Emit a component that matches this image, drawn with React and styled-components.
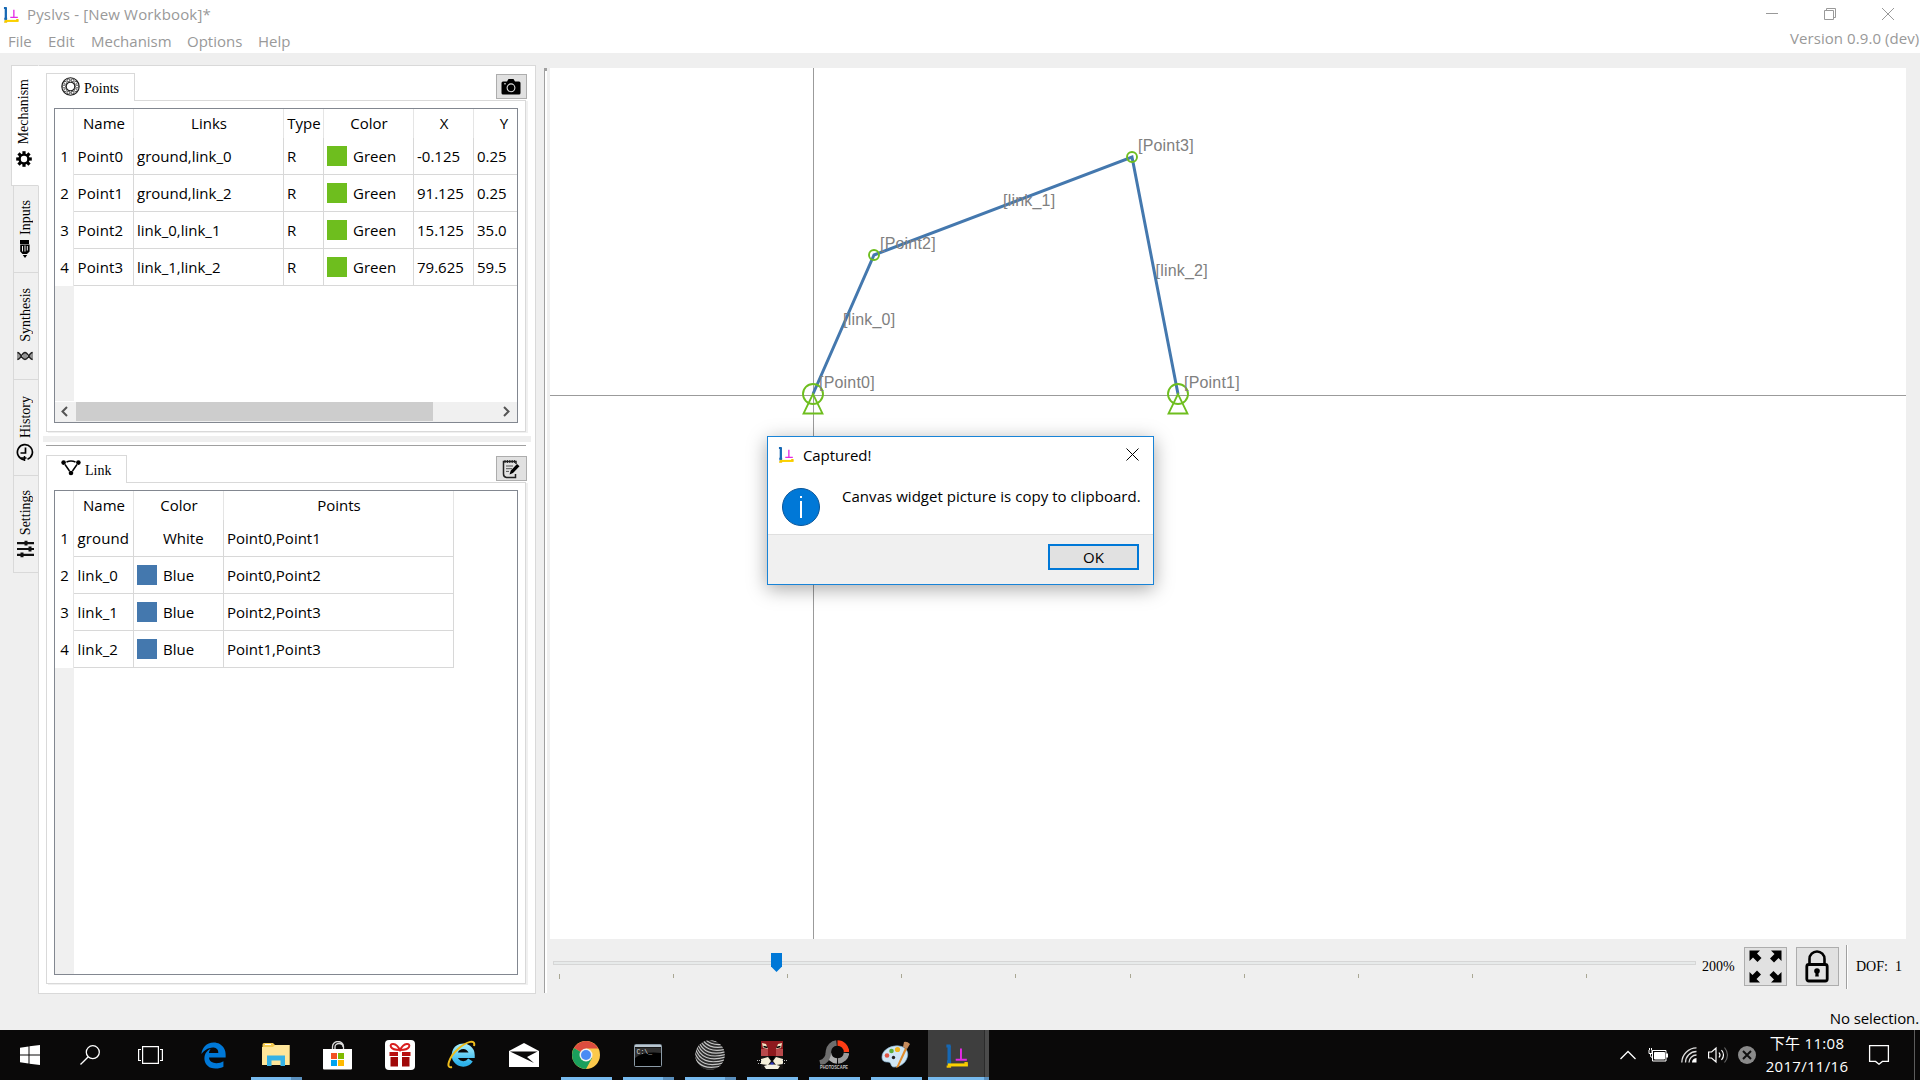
import React from "react";
import styled, { createGlobalStyle, css } from "styled-components";
import { FaEdgeLegacy } from "react-icons/fa";

const ui = `"Open Sans", "Noto Sans", "Noto Sans CJK TC", sans-serif`;
const song = `"Liberation Serif", serif`;

const GlobalStyle = createGlobalStyle`
  * { box-sizing: border-box; }
  body { margin: 0; background: #efefef; overflow: hidden; }
  svg { display: block; flex: none; }
`;

const Screen = styled.div`
  position: relative;
  width: 1920px;
  height: 1080px;
  display: flex;
  flex-direction: column;
  overflow: hidden;
  background: #efefef;
  font-family: ${ui};
  font-size: 15px;
  line-height: 20px;
  color: #000;
  white-space: nowrap;
`;

/* ---------- title and menu ---------- */
const Header = styled.header`
  height: 53px;
  flex: none;
  background: #fff;
  color: #999;
`;
const TitleBar = styled.div`
  display: flex;
  align-items: center;
  height: 28px;
  padding-left: 3px;
`;
const Title = styled.div`
  flex: 1;
  margin-left: 7px;
  letter-spacing: 0.16px;
`;
const WindowButtons = styled.div`
  display: flex;
  gap: 46px;
  padding-right: 26px;
`;
const MenuBar = styled.nav`
  display: flex;
  align-items: center;
  height: 25px;
  padding: 0 1px 0 8px;
  gap: 16px;
`;
const MenuItem = styled.span`
  width: ${(p) => p.$w}px;
  padding-bottom: ${(p) => (p.$end ? 6 : 0)}px;
  ${(p) => p.$end && css`margin-left: auto; letter-spacing: 0.07px;`}
`;

/* ---------- left dock ---------- */
const Body = styled.main`
  flex: 1;
  min-height: 0;
  display: flex;
  align-items: flex-start;
  padding-top: 12px;
`;
const SideTabs = styled.div`
  width: 39px;
  margin-right: -1px;
  flex: none;
  display: flex;
  flex-direction: column;
  align-items: flex-end;
  position: relative;
  z-index: 1;
`;
const SideTab = styled.div`
  width: ${(p) => (p.$active ? 28 : 26)}px;
  height: ${(p) => p.$h}px;
  display: flex;
  flex-direction: column;
  align-items: center;
  justify-content: flex-end;
  gap: ${(p) => (p.$active ? 5 : 4)}px;
  padding: 0 2px ${(p) => (p.$active ? 16 : 13)}px 0;
  background: ${(p) => (p.$active ? "#fff" : "#f0f0f0")};
  border: 1px solid #d9d9d9;
  border-top-width: ${(p) => (p.$active ? 1 : 0)}px;
  border-right-color: ${(p) => (p.$active ? "#fff" : "#d9d9d9")};
`;
const SideLabel = styled.span`
  writing-mode: vertical-rl;
  transform: rotate(180deg);
  font: 14px/20px ${song};
  padding-right: ${(p) => (p.$active ? 0 : 1)}px;
`;
const SideIcon = styled.div`
  height: 20px;
  display: flex;
  align-items: center;
`;
const Dock = styled.section`
  width: 498px;
  height: 929px;
  flex: none;
  display: flex;
  flex-direction: column;
  background: #fff;
  border: 1px solid #d9d9d9;
  padding: 7px 8px 9px 7px;
`;
const TabRow = styled.div`
  display: flex;
  justify-content: space-between;
  height: 28px;
  margin-bottom: -1px;
  position: relative;
  z-index: 1;
`;
const Tab = styled.div`
  width: ${(p) => p.$w}px;
  height: 28px;
  display: flex;
  align-items: flex-start;
  padding: 3px 0 0 14px;
  background: #fff;
  border: 1px solid #d9d9d9;
  border-bottom: 0;
  font: 14px/24px ${song};
  gap: 4px;
`;
const ToolButton = styled.button`
  width: ${(p) => p.$w || 31}px;
  height: ${(p) => p.$h || 25}px;
  flex: none;
  display: flex;
  align-items: center;
  justify-content: center;
  padding: 0 1px 0 0;
  margin: ${(p) => p.$m || "1px 0 0"};
  background: #e1e1e1;
  border: 1px solid #adadad;
`;
const Pane = styled.div`
  width: 480px;
  height: ${(p) => p.$h}px;
  flex: none;
  padding: 7px;
  border: 1px solid #d9d9d9;
  box-shadow: 2px 1px 0 #f0f0f0;
`;
const DockGap = styled.div`
  height: 6px;
  width: 488px;
  margin: 4px 0 3px -3px;
  flex: none;
  background: #efefef;
`;
const DockRule = styled.div`
  width: 480px;
  height: 1px;
  margin-bottom: 9px;
  flex: none;
  background: #a0a0a0;
`;

/* ---------- tables ---------- */
const Table = styled.div`
  width: 464px;
  height: ${(p) => p.$h}px;
  display: flex;
  flex-direction: column;
  border: 1px solid #828790;
  background: #fff;
  overflow: hidden;
`;
const HeadRow = styled.div`
  display: flex;
  height: 29px;
  flex: none;
`;
const Row = styled.div`
  display: flex;
  height: 37px;
  flex: none;
`;
const HeadCell = styled.div`
  width: ${(p) => p.$w}px;
  flex: none;
  padding: 4px 0 0 1px;
  text-align: center;
  border-right: 1px solid #e5e5e5;
`;
const RowNumber = styled(HeadCell)`
  padding: 8px 0 0 1px;
`;
const Cell = styled.div`
  width: ${(p) => p.$w}px;
  flex: none;
  display: flex;
  align-items: center;
  padding: 0 0 1px ${(p) => (p.$first ? 3.5 : 3)}px;
  letter-spacing: ${(p) => (p.$first ? 0.12 : 0)}px;
  border-right: 1px solid #d8d8d8;
  border-bottom: 1px solid #d8d8d8;
`;
const Swatch = styled.i`
  width: 20px;
  height: 20px;
  margin: 0 6px 0 0;
  background: ${(p) => p.$c};
`;
const EmptyRows = styled.div`
  flex: 1;
  width: 19px;
  background: #f0f0f0;
`;
const ScrollBar = styled.div`
  height: 20px;
  margin-top: 1px;
  padding-bottom: 1px;
  flex: none;
  display: flex;
  align-items: center;
  background: #f0f0f0;
`;
const ScrollThumb = styled.div`
  width: 357px;
  height: 19px;
  background: #cdcdcd;
`;
const ScrollArrow = styled.div`
  width: 21px;
  display: flex;
  justify-content: center;
  padding-right: ${(p) => (p.$end ? 0 : 3)}px;
  margin-left: ${(p) => (p.$end ? "auto" : 0)};
`;

/* ---------- canvas side ---------- */
const Splitter = styled.div`
  width: 3px;
  height: 925px;
  margin: 3px 3px 0 8px;
  flex: none;
  border-left: 1px solid #a0a0a0;
  background: linear-gradient(#a0a0a0 0 3px, #fff 3px);
`;
const Work = styled.section`
  width: 1370px;
  flex: none;
  padding-top: 3px;
`;
const Canvas = styled.div`
  width: 1356px;
  height: 871px;
  background: #fff;
`;
const Controls = styled.div`
  display: flex;
  align-items: center;
  height: 56px;
  font: 14px/20px ${song};
`;
const Slider = styled.div`
  position: relative;
  width: 1143px;
  height: 56px;
  margin-left: 3px;
  padding-top: 22px;
`;
const Groove = styled.div`
  height: 4px;
  background: #e7eaea;
  border: 1px solid #d6d6d6;
`;
const Thumb = styled.div`
  position: absolute;
  left: 218px;
  top: 14px;
`;
const Ticks = styled.div`
  display: flex;
  justify-content: space-between;
  width: 1028px;
  margin: 9px 0 0 6px;
`;
const Tick = styled.i`
  width: 1px;
  height: ${(p) => (p.$first ? 5 : 4)}px;
  background: #a9a794;
`;
const Percent = styled.span`
  width: 42px;
  margin-left: 6px;
`;
const Divider = styled.div`
  width: 2px;
  height: 44px;
  margin: 0 8px 0 7px;
  border-left: 1px solid #a0a0a0;
  background: #fff;
`;
const Dof = styled.span`
  white-space: pre;
`;
const Status = styled.div`
  margin-top: 13px;
  padding-right: 1px;
  text-align: right;
  letter-spacing: -0.1px;
`;

/* ---------- message box ---------- */
const Dialog = styled.div`
  position: absolute;
  left: 767px;
  top: 436px;
  width: 387px;
  height: 149px;
  display: flex;
  flex-direction: column;
  background: #fff;
  border: 1px solid #1883d7;
  box-shadow: 0 4px 18px rgba(0, 0, 0, 0.35);
`;
const DialogTitle = styled.div`
  display: flex;
  align-items: center;
  height: 35px;
  padding: 0 14px 0 10px;
  gap: 8px;
`;
const DialogName = styled.span`
  flex: 1;
  letter-spacing: -0.1px;
`;
const DialogBody = styled.div`
  flex: 1;
  display: flex;
  align-items: flex-start;
  gap: 22px;
  padding: 14px 0 0 14px;
`;
const InfoMark = styled.div`
  padding-top: 2px;
`;
const Message = styled.span`
  letter-spacing: 0.04px;
`;
const DialogFooter = styled.div`
  height: 50px;
  display: flex;
  justify-content: flex-end;
  padding: 9px 14px 0 0;
  background: #f0f0f0;
  border-top: 1px solid #dfdfdf;
`;
const OkButton = styled.button`
  width: 91px;
  height: 26px;
  padding: 0;
  font: 15px/20px ${ui};
  background: #e1e1e1;
  border: 2px solid #0078d7;
`;

/* ---------- taskbar ---------- */
const TaskBar = styled.footer`
  height: 50px;
  flex: none;
  display: flex;
  background: #0a0909;
  color: #fff;
`;
const StartCell = styled.div`
  width: ${(p) => p.$w}px;
  display: flex;
  align-items: center;
  justify-content: center;
  padding-right: ${(p) => p.$pr || 0}px;
`;
const AppButton = styled.div`
  width: 62px;
  display: flex;
  flex-direction: column;
  align-items: center;
`;
const AppFace = styled.div`
  width: 61px;
  height: 47px;
  display: flex;
  align-items: center;
  justify-content: center;
  padding: 3px 1px 0 0;
  background: ${(p) => (p.$active ? "linear-gradient(90deg,#3e3e3e 0 56px,#2b2b2b 56px 57px,#4b4b4b 57px)" : "none")};
`;
const RunLine = styled.div`
  width: ${(p) => (p.$active ? 61 : 51)}px;
  height: 3px;
  background: ${(p) =>
    p.$multi ? `linear-gradient(90deg,#76b9ed 0 ${p.$active ? 56 : 40}px,#5a8fbd ${p.$active ? 56 : 40}px)` : "#76b9ed"};
`;
const Tray = styled.div`
  margin-left: auto;
  display: flex;
  align-items: center;
`;
const TrayIcon = styled.div`
  width: ${(p) => p.$w}px;
`;
const Clock = styled.div`
  width: 98px;
  text-align: center;
  line-height: 23px;
  padding-bottom: 1px;
  letter-spacing: 0.3px;
`;
const ShowDesktop = styled.div`
  width: 6px;
  height: 50px;
  border-left: 1px solid #5c5c5c;
`;

/* ---------- drawings ---------- */
const Logo = ({ size = 18 }) => (
  <svg width={size} height={size} viewBox="0 0 18 18" fill="none">
    <path d="M3 2v14" stroke="#1668b4" strokeWidth="2.4" />
    <path d="M1 2.2h3M1.4 13.5h3" stroke="#1668b4" strokeWidth="2.2" />
    <path d="M2 15.8h14.5" stroke="#fbd100" strokeWidth="2.2" />
    <path d="M1.2 17h3.2M14 14.5h2.4" stroke="#f2c400" strokeWidth="1.6" />
    <path d="M11.500 4v8M7.700 12h8" stroke="#e42be4" strokeWidth="1.4" />
  </svg>
);

const Gear = () => (
  <svg width="16" height="16" viewBox="-8 -8 16 16">
    {[0, 45, 90, 135].map((a) => (
      <rect key={a} x="-1.6" y="-7.8" width="3.2" height="15.6" transform={`rotate(${a})`} />
    ))}
    <circle r="5.6" />
    <circle r="3.2" fill="#fff" />
  </svg>
);
const Brush = () => (
  <svg width="14" height="20" viewBox="0 0 14 20">
    <path d="M2 1h9v4H2z" />
    <path d="M2.2 5.5h9.4v7L9 15H4.5L2.2 12.5z" />
    <path d="M4.5 7v5.5M7 6.500v6M9.300 7v4.5" stroke="#f0f0f0" strokeWidth="1" />
    <path d="M4.800 16h4.400L7 19z" />
  </svg>
);
const Helix = () => (
  <svg width="16" height="10" viewBox="0 0 16 10" fill="none" stroke="#222" strokeWidth="1.400">
    <path d="M.5 1.500C4 1.500 4.500 8.500 8 8.500s4-7 7.500-7M.5 8.500C4 8.500 4.500 1.500 8 1.500s4 7 7.500 7" />
    <path d="M1 1v8M3 3v4M7 2v6M9 2v6M13 3v4M15 1v8" strokeWidth=".9" />
  </svg>
);
const HistoryIcon = () => (
  <svg width="18" height="19" viewBox="0 0 18 19" fill="none" stroke="#000">
    <path d="M8 16.600A7.500 7.500 0 1 1 11.500 16.200" strokeWidth="1.700" />
    <path d="M9.500 4.500v5.500H4.500" strokeWidth="1.700" />
    <path d="M5 15h5.500M8.500 13v5" strokeWidth="1.500" />
  </svg>
);
const Sliders = () => (
  <svg width="17" height="18" viewBox="0 0 17 18" stroke="#111" strokeWidth="2.200">
    <path d="M0 3.200h17M0 9h17M0 14.800h17" />
    <path d="M9 .8v4.800M13 6.600v4.800M5 12.400v4.800" strokeWidth="3" />
  </svg>
);
const Bearing = () => (
  <svg width="19" height="19" viewBox="-9.5 -9.5 19 19" fill="none" stroke="#1a1a1a">
    <circle r="8.700" strokeWidth="1.100" />
    <circle r="4.300" strokeWidth="1.100" />
    {Array.from({ length: 10 }, (_, i) => (
      <circle key={i} cx="6.500" r="1.500" strokeWidth=".7" transform={`rotate(${i * 36})`} />
    ))}
  </svg>
);
const LinkIcon = () => (
  <svg width="20" height="17" viewBox="0 0 20 17">
    <path d="M5.500 3Q10 1 14.500 3M4 5.500L8.500 12M16 5.500L11.500 12" fill="none" stroke="#000" strokeWidth="1.500" />
    <circle cx="2.600" cy="3.600" r="2.300" />
    <circle cx="17.400" cy="3.600" r="2.300" />
    <circle cx="10" cy="14" r="2.300" />
  </svg>
);
const Camera = () => (
  <svg width="20" height="16" viewBox="0 0 20 16">
    <path d="M2 2.500h4L7.500 0h5L14 2.500h4a1.500 1.500 0 0 1 1.500 1.500v10A1.500 1.500 0 0 1 18 15.500H2A1.500 1.500 0 0 1 .5 14V4A1.500 1.500 0 0 1 2 2.500z" />
    <circle cx="10" cy="8.800" r="3.900" fill="none" stroke="#ddd" strokeWidth="1.100" />
    <path d="M3 4.800h2" stroke="#ddd" />
  </svg>
);
const Notepad = () => (
  <svg width="18" height="20" viewBox="0 0 18 20" fill="none">
    <path d="M14 5V2.500H1.500V15q0 3 3 3.500H13.500V15" stroke="#222" strokeWidth="1.500" />
    <path d="M3 1v3M5.400 1v3M7.800 1v3M10.200 1v3M12.600 1v3" stroke="#222" />
    <path d="M4 7h7M4 9.700h6M4 12.400h3" stroke="#555" />
    <path d="M7.500 15.500l1.200-3.800 6.300-6.700 2.500 2.200L11 14z" fill="#000" />
  </svg>
);
const Expand = () => (
  <svg width="33" height="33" viewBox="-16.5 -16.5 33 33">
    {[0, 90, 180, 270].map((a) => (
      <path key={a} transform={`rotate(${a})`} d="M-16-16h10.500l-3 3 4.500 4.500-4 4-4.500-4.500-3.500 3.500z" />
    ))}
  </svg>
);
const Lock = () => (
  <svg width="24" height="33" viewBox="0 0 24 33">
    <path d="M4.500 14V9a7.500 7.500 0 0 1 15 0v5" fill="none" stroke="#000" strokeWidth="2.600" />
    <rect x="1.800" y="14.500" width="20.400" height="16.500" rx="2" fill="none" stroke="#000" strokeWidth="2.800" />
    <circle cx="12" cy="21" r="2.800" />
    <path d="M10.800 21h2.400l.6 5.500h-3.600z" />
  </svg>
);

const POINTS = [
  { name: "[Point0]", x: 813, y: 394, ground: true },
  { name: "[Point1]", x: 1178, y: 394, ground: true },
  { name: "[Point2]", x: 874, y: 255 },
  { name: "[Point3]", x: 1132, y: 157 },
];
const LABELS = [
  ["[link_0]", 843, 325],
  ["[link_1]", 1003, 206],
  ["[link_2]", 1155.5, 276],
];
const Mechanism = () => (
  <svg width="1356" height="871" viewBox="550 68 1356 871" fill="none">
    <path d="M550 395.500H1906M813.500 68V939" stroke="#9b9b9b" />
    <path d="M813 394L874 255L1132 157L1178 394" stroke="#4478ae" strokeWidth="3" />
    {POINTS.map((p) => (
      <g key={p.name}>
        <circle cx={p.x} cy={p.y} r={p.ground ? 10 : 5} stroke="#6ebe1e" strokeWidth="1.900" />
        {p.ground && <path d={`M${p.x} ${p.y}l-9.500 19.500h19z`} stroke="#6ebe1e" strokeWidth="1.800" />}
      </g>
    ))}
    <g fill="#808080" fontFamily='"Liberation Sans", Arial, sans-serif' fontSize="16" letterSpacing="0.2">
      {POINTS.map((p) => (
        <text key={p.name} x={p.x + 6} y={p.y - 6}>{p.name}</text>
      ))}
      {LABELS.map(([t, x, y]) => (
        <text key={t} x={x} y={y}>{t}</text>
      ))}
    </g>
  </svg>
);

const Chevron = ({ flip }) => (
  <svg width="8" height="11" viewBox="0 0 8 11" fill="none" stroke="#555" strokeWidth="2">
    <path d={flip ? "M1 1l4.500 4.500L1 10" : "M7 1L2.500 5.500 7 10"} />
  </svg>
);

const Explorer = () => (
  <svg width="28" height="24" viewBox="0 0 28 24">
    <path d="M.5 1.500Q.5 0 2 0h9l2 2h14.500v20H.5z" fill="#f4cb52" />
    <path d="M0 4h11l2-2h14.500v20H0z" fill="#ffe69a" />
    <path d="M3 1.500h6" stroke="#fff" />
    <path d="M5 23V12.500h18V23h-4.500v-5.500h-9V23z" fill="#35b2e6" />
  </svg>
);
const Store = () => (
  <svg width="29" height="29" viewBox="0 0 29 29">
    <path d="M9.500 8V5.500a5.500 5 0 0 1 11 0V8M12 8V6a4 3.500 0 0 1 8 0" fill="none" stroke="#ddd" strokeWidth="1.300" />
    <path d="M0 8h29v19.500q0 1-1 1H1q-1 0-1-1z" fill="#fff" />
    <path d="M8 12h6v6H8z" fill="#f25022" />
    <path d="M15 12h6v6h-6z" fill="#7fba00" />
    <path d="M8 19h6v6H8z" fill="#00a4ef" />
    <path d="M15 19h6v6h-6z" fill="#ffb900" />
  </svg>
);
const Gift = () => (
  <svg width="30" height="30" viewBox="0 0 30 30">
    <rect width="30" height="30" rx="4" fill="#fff" />
    <path d="M15 10C11 2 4 3 6 7c1 2 5 3 9 3 4 0 8-1 9-3 2-4-5-5-9 3z" fill="none" stroke="#d81e1e" strokeWidth="2" />
    <path d="M4.500 12H13v4H4.500zM17 12h8.500v4H17z" fill="#b80f0f" />
    <path d="M5.500 17H13v9.500H5.500zM17 17h7.500v9.500H17z" fill="#a00808" />
  </svg>
);
const Explorer11 = () => (
  <svg width="30" height="30" viewBox="0 0 30 30">
    <defs>
      <linearGradient id="ie" x1="0" y1="0" x2="0" y2="1">
        <stop offset="0" stopColor="#9be8fb" />
        <stop offset="1" stopColor="#2cb1ea" />
      </linearGradient>
    </defs>
    <path d="M23.500 20A8.800 8.800 0 1 1 25 15.200H9" fill="none" stroke="url(#ie)" strokeWidth="5.500" />
    <path d="M5 27C-2 29 2 17 11 9S29-1 27 6" fill="none" stroke="#efbd1c" strokeWidth="2" />
  </svg>
);
const Mail = () => (
  <svg width="30" height="24" viewBox="0 0 30 24">
    <path d="M0 8L15 0l15 8v16H0z" fill="#fff" />
    <path d="M1 8.500h27.500L18 14l7 6z" fill="#0a0909" />
  </svg>
);
const Chrome = () => (
  <svg width="28" height="28" viewBox="-14 -14 28 28">
    <circle r="14" fill="#fcc94b" />
    <path d="M0 0L-12.100-7A14 14 0 0 1 12.100-7L12.500-6.500H0z" fill="#dc4c3f" />
    <path d="M0 0L-12.100-7A14 14 0 0 0 0 14L6 3z" fill="#1a9f5c" />
    <circle r="6.500" fill="#f1f1f1" />
    <circle r="5" fill="#4b8bf4" />
  </svg>
);
const Terminal = () => (
  <svg width="28" height="23" viewBox="0 0 28 23">
    <rect x=".5" y=".5" width="27" height="22" rx="1" fill="#000" stroke="#8b9aa6" />
    <path d="M1 1h26v2H1z" fill="#b9c6d0" />
    <path d="M1 14Q10 7 27 9V3.500H1z" fill="#303030" />
    <text x="2.500" y="9.500" fill="#ddd" fontSize="6.500" fontFamily="Liberation Mono, monospace">C:\_</text>
  </svg>
);
const Sphere = () => (
  <svg width="30" height="30" viewBox="-15 -15 30 30">
    <defs>
      <clipPath id="ball"><circle r="14.800" /></clipPath>
    </defs>
    <g clipPath="url(#ball)">
      <circle r="15" fill="#2b2b2b" />
      <g fill="none" stroke="#c4c4c4" strokeWidth="1.200" transform="rotate(18)">
        {[-21, -18, -15, -12, -9, -6, -3, 0, 3, 6, 9, 12, 15].map((y) => (
          <path key={y} d={`M-17 ${y - 6}Q-5 ${y + 12} 17 ${y - 4}`} />
        ))}
      </g>
    </g>
  </svg>
);
const Lion = () => (
  <svg width="30" height="29" viewBox="0 0 30 29">
    <path d="M4 0h22v28H4z" fill="#8e1a1e" />
    <path d="M4 8h7v9H4zM19 8h7v9h-7z" fill="#b8494b" />
    <path d="M5 2l4 1 2 5-5-1zM25 2l-4 1-2 5 5-1z" fill="#f4e6c4" />
    <path d="M6.500 5.500l4 1M23.500 5.500l-4 1" stroke="#000" strokeWidth="1.800" />
    <path d="M4 15h22v13H4z" fill="#161312" />
    <path d="M4 18l7-2 3 4-3 4-7-1zM26 18l-7-2-3 4 3 4 7-1z" fill="#f6f0da" />
    <path d="M12 15h6l-2 4h-2z" fill="#000" />
    <path d="M7 25q8-3.500 16 0l-2 3H9z" fill="#f4f0e2" />
    <path d="M13.500 21.500h3v2h-3z" fill="#2b35c9" />
    <path d="M0 19.500h5M1 22.500h4M25 19.500h5M25 22.500h4" stroke="#bbb" strokeDasharray="1 1" />
  </svg>
);
const PhotoScape = () => (
  <svg width="30" height="31" viewBox="0 0 30 31">
    <g fill="none" strokeWidth="5.500">
      <path d="M18.500 3A9 9 0 0 1 27.500 12" stroke="#ff3c14" />
      <path d="M27.500 13A9 9 0 0 1 19 21" stroke="#9a9a9a" />
      <path d="M18 21A9 9 0 0 1 9.500 13" stroke="#b0b0b0" />
      <path d="M17.500 3A9 9 0 0 0 9.500 11Q9.500 21 1 23" stroke="#6e6e6e" />
    </g>
    <path d="M0 24.500h30v6.500H0z" fill="#0a0909" />
    <text x="1" y="29.200" textLength="28" lengthAdjust="spacingAndGlyphs" fill="#c8c8c8" fontSize="5.500" fontWeight="bold" fontFamily="Liberation Sans, sans-serif">PHOTOSCAPE</text>
  </svg>
);
const Paint = () => (
  <svg width="30" height="28" viewBox="0 0 30 28">
    <path d="M1 16C1 9 10 4 18 5c8 1 10 7 8 12-2 6-8 9-13 9-4 0-2-5-6-5S1 20 1 16z" fill="#cfe6f5" stroke="#8ab6d6" strokeWidth=".7" />
    <circle cx="6" cy="14.500" r="2.300" fill="#e05545" />
    <circle cx="10.500" cy="10" r="2.300" fill="#5cae3c" />
    <circle cx="16.500" cy="8.500" r="2.600" fill="#f2b51d" />
    <circle cx="12.500" cy="16.500" r="1.700" fill="#222" />
    <path d="M15 27L24 7l2 1-8.500 18z" fill="#e08a2a" />
    <path d="M23 1q3-1 6 2l-3 5-4-2z" fill="#c58b5c" />
  </svg>
);

/* ---------- data ---------- */
const SIDE = [
  ["Mechanism", 121, Gear],
  ["Inputs", 87, Brush],
  ["Synthesis", 107, Helix],
  ["History", 96, HistoryIcon],
  ["Settings", 97, Sliders],
];
const POINT_COLS = [["Name", 60], ["Links", 150], ["Type", 40], ["Color", 90], ["X", 60], ["Y", 60]];
const POINT_ROWS = [
  ["Point0", "ground,link_0", "R", "Green", "-0.125", "0.25"],
  ["Point1", "ground,link_2", "R", "Green", "91.125", "0.25"],
  ["Point2", "link_0,link_1", "R", "Green", "15.125", "35.0"],
  ["Point3", "link_1,link_2", "R", "Green", "79.625", "59.5"],
];
const LINK_COLS = [["Name", 60], ["Color", 90], ["Points", 230]];
const LINK_ROWS = [
  ["ground", "White", "Point0,Point1"],
  ["link_0", "Blue", "Point0,Point2"],
  ["link_1", "Blue", "Point2,Point3"],
  ["link_2", "Blue", "Point1,Point3"],
];
const COLORS = { Green: "#6ebe1e", Blue: "#4478ae", White: "#fff" };
const APPS = [
  { icon: <FaEdgeLegacy size={27} color="#0078d7" /> },
  { icon: <Explorer />, run: true, multi: true },
  { icon: <Store /> },
  { icon: <Gift /> },
  { icon: <Explorer11 /> },
  { icon: <Mail /> },
  { icon: <Chrome />, run: true },
  { icon: <Terminal />, run: true, multi: true },
  { icon: <Sphere />, run: true, multi: true },
  { icon: <Lion />, run: true },
  { icon: <PhotoScape />, run: true },
  { icon: <Paint />, run: true },
  { icon: <Logo size={25} />, run: true, multi: true, active: true },
];

const DataTable = ({ cols, rows, height, scroll }) => (
  <Table $h={height}>
    <HeadRow>
      <HeadCell $w={19} />
      {cols.map(([name, w]) => <HeadCell key={name} $w={w}>{name}</HeadCell>)}
    </HeadRow>
    {rows.map((r, i) => (
      <Row key={i}>
        <RowNumber $w={19}>{i + 1}</RowNumber>
        {r.map((v, j) => (
          <Cell key={j} $w={cols[j][1]} $first={j === 0}>
            {COLORS[v] && <Swatch $c={COLORS[v]} />}
            {v}
          </Cell>
        ))}
      </Row>
    ))}
    <EmptyRows />
    {scroll && (
      <ScrollBar>
        <ScrollArrow><Chevron /></ScrollArrow>
        <ScrollThumb />
        <ScrollArrow $end><Chevron flip /></ScrollArrow>
      </ScrollBar>
    )}
  </Table>
);

export default function App() {
  return (
    <Screen>
      <GlobalStyle />
      <Header>
        <TitleBar>
          <Logo size={17} />
          <Title>Pyslvs - [New Workbook]*</Title>
          <WindowButtons>
            <svg width="12" height="12"><path d="M0 5.500h12" stroke="#999" /></svg>
            <svg width="12" height="12" fill="none" stroke="#999"><path d="M.5 2.500h9v9h-9zM2.500 2.500v-2h9v9h-2" /></svg>
            <svg width="12" height="12" stroke="#999"><path d="M0 0l12 12M12 0L0 12" /></svg>
          </WindowButtons>
        </TitleBar>
        <MenuBar>
          <MenuItem $w={24}>File</MenuItem>
          <MenuItem $w={27}>Edit</MenuItem>
          <MenuItem $w={80}>Mechanism</MenuItem>
          <MenuItem $w={55}>Options</MenuItem>
          <MenuItem $w={32}>Help</MenuItem>
          <MenuItem $w={129} $end>Version 0.9.0 (dev)</MenuItem>
        </MenuBar>
      </Header>

      <Body>
        <SideTabs>
          {SIDE.map(([name, h, Icon], i) => (
            <SideTab key={name} $h={h} $active={i === 0}>
              <SideLabel $active={i === 0}>{name}</SideLabel>
              <SideIcon><Icon /></SideIcon>
            </SideTab>
          ))}
        </SideTabs>
        <Dock>
          <TabRow>
            <Tab $w={89}><Bearing />Points</Tab>
            <ToolButton><Camera /></ToolButton>
          </TabRow>
          <Pane $h={332}><DataTable cols={POINT_COLS} rows={POINT_ROWS} height={315} scroll /></Pane>
          <DockGap />
          <DockRule />
          <TabRow>
            <Tab $w={81}><LinkIcon />Link</Tab>
            <ToolButton><Notepad /></ToolButton>
          </TabRow>
          <Pane $h={502}><DataTable cols={LINK_COLS} rows={LINK_ROWS} height={485} /></Pane>
        </Dock>
        <Splitter />
        <Work>
          <Canvas><Mechanism /></Canvas>
          <Controls>
            <Slider>
              <Groove />
              <Ticks>{Array.from({ length: 10 }, (_, i) => <Tick key={i} $first={i === 0} />)}</Ticks>
              <Thumb>
                <svg width="11" height="19"><path d="M0 0h11v13.500L5.500 19 0 13.500z" fill="#0078d7" /></svg>
              </Thumb>
            </Slider>
            <Percent>200%</Percent>
            <ToolButton $w={43} $h={39} $m="0 9px 2px 0"><Expand /></ToolButton>
            <ToolButton $w={43} $h={39} $m="0 0 2px"><Lock /></ToolButton>
            <Divider />
            <Dof>{"DOF:  1"}</Dof>
          </Controls>
          <Status>No selection.</Status>
        </Work>
      </Body>

      <TaskBar>
        <StartCell $w={60}>
          <svg width="20" height="20" fill="#fff"><path d="M0 2.700L8.500 1.500v8H0zM9.500 1.300L20 0v9.500H9.500zM0 10.500h8.500v8L0 17.300zM9.500 10.500H20V20L9.500 18.700z" /></svg>
        </StartCell>
        <StartCell $w={60}>
          <svg width="20" height="20" fill="none" stroke="#fff" strokeWidth="1.300"><circle cx="12.800" cy="7.200" r="6.500" /><path d="M8.300 11.700L.5 19.500" /></svg>
        </StartCell>
        <StartCell $w={63} $pr={3}>
          <svg width="25" height="18" fill="none" stroke="#fff" strokeWidth="1.200"><path d="M4.600.6h15.800v16.800H4.600zM3 3.500H.6v11H3M22 3.500h2.400v11H22" /></svg>
        </StartCell>
        {APPS.map((a, i) => (
          <AppButton key={i}>
            <AppFace $active={a.active}>{a.icon}</AppFace>
            {a.run && <RunLine $multi={a.multi} $active={a.active} />}
          </AppButton>
        ))}
        <Tray>
          <TrayIcon $w={28}><svg width="16" height="10" fill="none" stroke="#fff" strokeWidth="1.300"><path d="M.5 9L8 1.500 15.500 9" /></svg></TrayIcon>
          <TrayIcon $w={33}>
            <svg width="20" height="14" fill="none" stroke="#fff"><path d="M4.500 2.500h13.500v10.500H4.500z" /><path d="M6.500 4.500h10v6.500h-10z" fill="#fff" /><path d="M19 5.500v4" strokeWidth="2" /><path d="M1 2v3.500h3V2M2.500 5.500v2q0 2 2 2M1.500 0v2M3.500 0v2" /></svg>
          </TrayIcon>
          <TrayIcon $w={27}>
            <svg width="17" height="17" fill="none" stroke="#ddd" strokeWidth="1.300"><path d="M.8 15.500A15 15 0 0 1 15.500.8M4.500 15.500a11 11 0 0 1 11-11M8 15.500a7.500 7.500 0 0 1 7.500-7.500" /><path d="M11 15.500q0-4 4.500-4.500v4.500z" fill="#fff" stroke="none" /></svg>
          </TrayIcon>
          <TrayIcon $w={30}>
            <svg width="21" height="18" fill="none" stroke="#fff" strokeWidth="1.200"><path d="M.6 6h3L8 2v14l-4.400-4h-3zM11 6.500q2 2.500 0 5M13.500 4q4 5 0 10" /><path d="M16.500 1.500q6 7.500 0 15" stroke="#666" /></svg>
          </TrayIcon>
          <TrayIcon $w={20}>
            <svg width="18" height="18"><circle cx="9" cy="9" r="9" fill="#8a8a8a" /><path d="M5 5l8 8M13 5l-8 8" stroke="#111" strokeWidth="2" /></svg>
          </TrayIcon>
          <Clock>下午 11:08<br />2017/11/16</Clock>
          <TrayIcon $w={58}>
            <svg width="46" height="20" fill="none" stroke="#fff" strokeWidth="1.300"><path d="M13.600.6h18.800v15.800h-6l-3.400 2.800-3.400-2.800h-6z" /></svg>
          </TrayIcon>
          <ShowDesktop />
        </Tray>
      </TaskBar>

      <Dialog>
        <DialogTitle>
          <Logo size={17} />
          <DialogName>Captured!</DialogName>
          <svg width="13" height="13" stroke="#000"><path d="M.5.5l12 12M12.500.5l-12 12" /></svg>
        </DialogTitle>
        <DialogBody>
          <InfoMark>
            <svg width="38" height="38">
              <circle cx="19" cy="19" r="18.500" fill="#0078d7" stroke="#0a569a" />
              <path d="M19 13v17M19 8v2" stroke="#fff" strokeWidth="2" />
            </svg>
          </InfoMark>
          <Message>Canvas widget picture is copy to clipboard.</Message>
        </DialogBody>
        <DialogFooter><OkButton>OK</OkButton></DialogFooter>
      </Dialog>
    </Screen>
  );
}
